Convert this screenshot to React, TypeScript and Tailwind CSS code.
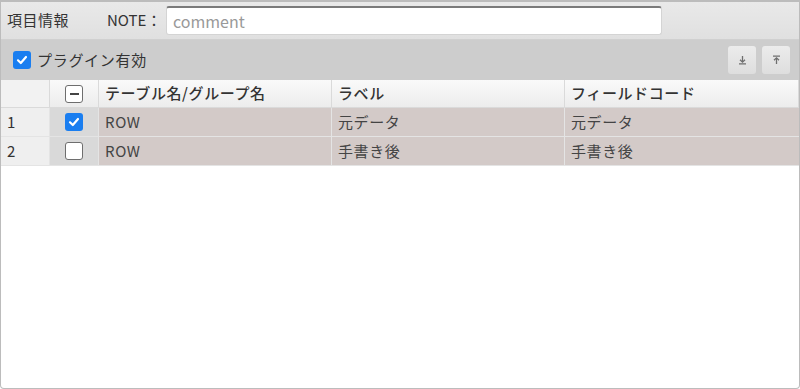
const font = "font-['Noto_Sans_CJK_JP','Noto_Sans',sans-serif]";

type Row = { no: number; checked: boolean; table: string; label: string; code: string };

const rows: Row[] = [
  { no: 1, checked: true, table: "ROW", label: "元データ", code: "元データ" },
  { no: 2, checked: false, table: "ROW", label: "手書き後", code: "手書き後" },
];

function CheckBox({ state }: { state: "on" | "off" | "mixed" }) {
  if (state === "on") {
    return (
      <span className="flex h-[18px] w-[18px] items-center justify-center rounded-[3px] bg-[#1a7ef0]">
        <svg width="12" height="12" viewBox="0 0 12 12" fill="none">
          <path d="M2 6.3 L4.8 9 L10 3" stroke="white" strokeWidth="2.2" strokeLinecap="round" strokeLinejoin="round" />
        </svg>
      </span>
    );
  }
  return (
    <span className="flex h-[18px] w-[18px] items-center justify-center rounded-[3px] border-[1.5px] border-[#6e6e6e] bg-white">
      {state === "mixed" && <span className="h-[2px] w-[9px] bg-[#444]" />}
    </span>
  );
}

function ToolButton({ up }: { up?: boolean }) {
  return (
    <button className="flex h-[28px] w-[28px] items-center justify-center rounded-[3px] bg-gradient-to-b from-[#ececec] to-[#dedede]">
      <svg width="9" height="10" viewBox="0 0 9 10" fill="none" stroke="#6f6f6f" strokeWidth="1.3">
        {up ? (
          <>
            <path d="M1 1.2 H8" />
            <path d="M4.5 9 V3" />
            <path d="M2 5.3 L4.5 2.8 L7 5.3" />
          </>
        ) : (
          <>
            <path d="M1 8.8 H8" />
            <path d="M4.5 1 V7" />
            <path d="M2 4.7 L4.5 7.2 L7 4.7" />
          </>
        )}
      </svg>
    </button>
  );
}

export default function App() {
  return (
    <div className={`${font} h-[389px] w-[800px] bg-white text-[#333]`}>
      <div className="flex h-full flex-col overflow-hidden rounded-b-[4px] border border-t-2 border-[#bcbcbc]">
        <div className="flex h-[38px] items-center border-b border-[#d0d0d0] bg-gradient-to-b from-[#e9e9e9] to-[#e0e0e0] pl-[6px] text-[15px]">
          <span className="w-[100px] tracking-[0.5px]">項目情報</span>
          <span className="w-[59px]">NOTE：</span>
          <div className="flex h-[29px] w-[496px] items-center rounded-[3px] border border-[#d4d4d4] border-t-2 border-t-[#7a7a7a] bg-white px-[6px] text-[16px] text-[#999]">
            comment
          </div>
        </div>

        <div className="flex h-[40px] items-center gap-[6px] bg-[#cdcdcd] pl-[12px] pr-[9px] text-[15px] tracking-[0.7px]">
          <CheckBox state="on" />
          <span>プラグイン有効</span>
          <div className="ml-auto flex gap-[6px]">
            <ToolButton />
            <ToolButton up />
          </div>
        </div>

        <div className="grid grid-cols-[49px_49px_233px_233px_1fr] text-[15px] tracking-[0.6px]">
          <div className="h-[28px] border-b border-r border-[#dadada] bg-[#f2f2f2]" />
          <div className="flex h-[28px] items-center justify-center border-b border-r border-[#dadada] bg-gradient-to-b from-[#fafafa] to-[#ececec]">
            <CheckBox state="mixed" />
          </div>
          {["テーブル名/グループ名", "ラベル", "フィールドコード"].map((h) => (
            <div
              key={h}
              className="flex h-[28px] items-center border-b border-r border-[#dadada] bg-gradient-to-b from-[#fafafa] to-[#ececec] px-[6px] font-medium last:border-r-0"
            >
              {h}
            </div>
          ))}

          {rows.map((r) => (
            <div key={r.no} className="contents">
              <div className="flex h-[29px] items-center border-b border-r border-[#e4e4e4] bg-[#efefef] pl-[6px]">
                {r.no}
              </div>
              <div className="flex h-[29px] items-center justify-center border-b border-r border-[#e4e4e4] bg-[#d9d9d9]">
                <CheckBox state={r.checked ? "on" : "off"} />
              </div>
              <div className="flex h-[29px] items-center border-b border-r border-[#e4e4e4] bg-[#d3cac8] px-[6px] text-[#444]">
                {r.table}
              </div>
              <div className="flex h-[29px] items-center border-b border-r border-[#e4e4e4] bg-[#d3cac8] px-[6px] text-[#444]">
                {r.label}
              </div>
              <div className="flex h-[29px] items-center border-b border-[#e4e4e4] bg-[#d3cac8] px-[6px] text-[#444]">
                {r.code}
              </div>
            </div>
          ))}
        </div>
      </div>
    </div>
  );
}
